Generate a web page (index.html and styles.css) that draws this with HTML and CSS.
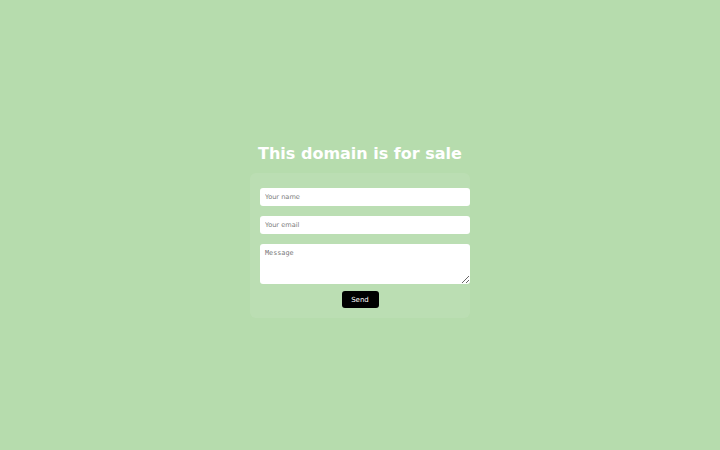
FILE: index.html
```html
<!DOCTYPE html>
<html>
<head>
<meta charset="utf-8">
<link rel="stylesheet" href="styles.css">
</head>
<body>
<main class="page">
  <h1 class="title">This domain is for sale</h1>
  <form class="card">
    <input class="field" type="text" placeholder="Your name">
    <input class="field" type="email" placeholder="Your email">
    <textarea class="field area" placeholder="Message"></textarea>
    <div class="actions"><button class="send" type="button">Send</button></div>
  </form>
</main>
</body>
</html>
```
FILE: styles.css
```css
html, body {
  margin: 0;
  padding: 0;
  height: 100%;
}
body {
  background: #b6dcad;
  font-family: "DejaVu Sans", sans-serif;
}
.page {
  height: 100%;
  display: flex;
  flex-direction: column;
  align-items: center;
  justify-content: center;
}
.title {
  margin: 12px 0 9px;
  color: #ffffff;
  font-size: 16px;
  font-weight: bold;
  line-height: 20px;
}
.card {
  width: 200px;
  padding: 15px 10px 10px;
  background: rgba(255, 255, 255, 0.08);
  border-radius: 6px;
  display: flex;
  flex-direction: column;
  gap: 10px;
}
.field {
  width: 210px;
  box-sizing: border-box;
  height: 18px;
  border: none;
  border-radius: 3px;
  background: #ffffff;
  padding: 0 5px;
  font-family: "DejaVu Sans", sans-serif;
  font-size: 6.6px;
  color: #333;
  margin: 0;
}
.field::placeholder {
  color: #7a7a7a;
}
.area {
  height: 40px;
  padding: 5px 5px 4px;
  font-family: "DejaVu Sans Mono", monospace;
  font-size: 6.8px;
  resize: vertical;
  margin-bottom: -3px;
}
.actions {
  display: flex;
  justify-content: center;
}
.send {
  width: 37px;
  height: 17px;
  border: none;
  border-radius: 3px;
  background: #000;
  color: #fff;
  font-family: "DejaVu Sans", sans-serif;
  font-size: 7px;
  padding: 0;
}
```
